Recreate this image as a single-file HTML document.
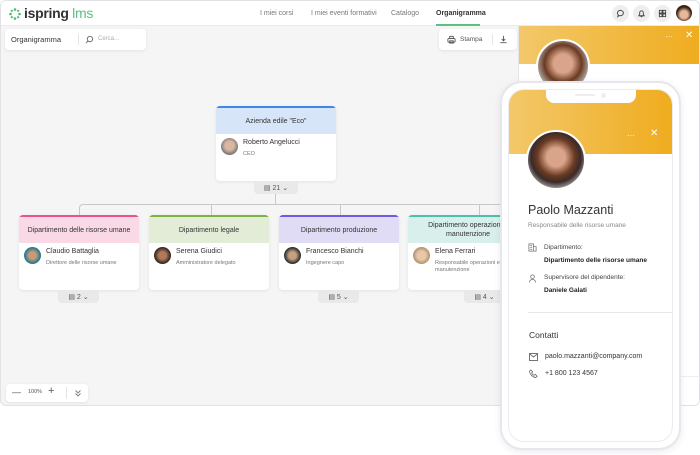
<!DOCTYPE html>
<html><head><meta charset="utf-8"><style>
*{box-sizing:border-box;margin:0;padding:0}
body{width:700px;height:455px;background:#fff;font-family:"Liberation Sans",Arial,sans-serif;position:relative;overflow:hidden;color:#333}
.abs{position:absolute}
.app{left:0;top:0;width:700px;height:406px;border:1px solid #e2e2e6;border-radius:6px;background:#f5f5f5;overflow:hidden}
.nav{left:0;top:0;width:700px;height:25px;background:#fff;border-bottom:1px solid #ebebeb}
.ni{position:absolute;top:9px;font-size:7px;color:#777}
.card{background:#fff;border-radius:4px;box-shadow:0 1px 3px rgba(0,0,0,.08);overflow:hidden}
.ch{height:28px;display:flex;align-items:center;justify-content:center;font-size:7px;color:#333;text-align:center;border-top:2px solid}
.av{position:absolute;width:17px;height:17px;border-radius:50%}
.nm{position:absolute;font-size:7px;color:#333}
.rl{position:absolute;font-size:5.5px;color:#777;line-height:7px}
.pill{background:#e9e9ea;border-radius:0 0 4px 4px;font-size:7px;color:#555;display:flex;align-items:center;justify-content:center;gap:3px;height:13px}
.ln{background:#c9c9cc}
.btn{width:17px;height:17px;border-radius:50%;background:#eeeeef;top:4px}
</style></head><body>
<div class="abs app">
 <div class="abs nav">
  <svg class="abs" style="left:8px;top:7px" width="12" height="12" viewBox="0 0 12 12" fill="#4cb870"><circle cx="6" cy="1.5" r="1.3"/><circle cx="6" cy="10.5" r="1.3"/><circle cx="1.5" cy="6" r="1.3"/><circle cx="10.5" cy="6" r="1.3"/><circle cx="2.8" cy="2.8" r="1.1"/><circle cx="9.2" cy="2.8" r="1.1"/><circle cx="2.8" cy="9.2" r="1.1"/><circle cx="9.2" cy="9.2" r="1.1"/></svg>
  <div class="abs" style="left:23px;top:4px;font-size:14px;font-weight:bold;color:#333;letter-spacing:-.3px;white-space:nowrap">ispring <b style="color:#5cc080;font-weight:normal">lms</b></div>
  <div class="ni" style="left:259px">I miei corsi</div>
  <div class="ni" style="left:310px">I miei eventi formativi</div>
  <div class="ni" style="left:390px">Catalogo</div>
  <div class="ni" style="left:435px;color:#333;font-weight:bold">Organigramma</div>
  <div class="abs" style="left:435px;top:23px;width:44px;height:2px;background:#5cc080"></div>
  <div class="abs btn" style="left:611px"></div>
  <div class="abs btn" style="left:632px"></div>
  <div class="abs btn" style="left:653px"></div>
  <div class="abs" style="left:675px;top:4px;width:16px;height:16px;border-radius:50%;background:radial-gradient(circle at 50% 60%,#e9b89a 30%,#3a2418 60%)"></div>
  <svg class="abs" style="left:615px;top:8px" width="9" height="9" viewBox="0 0 10 10" fill="none" stroke="#444" stroke-width="1"><path d="M5 1.5a3.5 3 0 1 1-1.5 5.8L2 8.5l.5-2A3.5 3 0 0 1 5 1.5z"/></svg>
  <svg class="abs" style="left:636px;top:8px" width="9" height="9" viewBox="0 0 10 10" fill="none" stroke="#444" stroke-width="1"><path d="M2 7.5h6l-1-1.5V4a2 2 0 0 0-4 0v2zM4 8.5h2"/></svg>
  <svg class="abs" style="left:657px;top:8px" width="9" height="9" viewBox="0 0 10 10" fill="none" stroke="#444" stroke-width="1"><rect x="1.5" y="1.5" width="3" height="3"/><rect x="5.5" y="1.5" width="3" height="3"/><rect x="1.5" y="5.5" width="3" height="3"/><rect x="5.5" y="5.5" width="3" height="3"/></svg>
 </div>
 <div class="abs card" style="left:4px;top:28px;width:141px;height:21px">
  <div class="abs" style="left:6px;top:6px;font-size:7.5px;color:#333">Organigramma</div>
  <div class="abs" style="left:73px;top:5px;width:1px;height:11px;background:#e5e5e5"></div>
  <svg class="abs" style="left:80px;top:6px" width="9" height="9" viewBox="0 0 10 10" fill="none" stroke="#666" stroke-width="1"><circle cx="5.5" cy="4.5" r="3"/><path d="M3.3 6.7L1 9"/></svg>
  <div class="abs" style="left:93px;top:7px;font-size:6px;color:#aaa">Cerca...</div>
 </div>
 <div class="abs card" style="left:438px;top:28px;width:78px;height:21px">
  <svg class="abs" style="left:8px;top:6px" width="9" height="9" viewBox="0 0 10 10" fill="none" stroke="#555" stroke-width="1"><rect x="1" y="4" width="8" height="4" rx="1"/><rect x="3" y="1.5" width="4" height="2.5"/><rect x="3" y="6.5" width="4" height="2.5"/></svg>
  <div class="abs" style="left:21px;top:7px;font-size:6.5px;color:#555">Stampa</div>
  <div class="abs" style="left:53px;top:5px;width:1px;height:11px;background:#e5e5e5"></div>
  <svg class="abs" style="left:60px;top:6px" width="9" height="9" viewBox="0 0 10 10" fill="none" stroke="#555" stroke-width="1"><path d="M5 1v5M3 4.5L5 6.5 7 4.5M1.5 8.5h7"/></svg>
 </div>

 <div class="abs card" style="left:215px;top:105px;width:120px;height:75px">
  <div class="ch" style="background:#d6e6f8;border-color:#3d86e6">Azienda edile "Eco"</div>
  <div class="av" style="left:5px;top:32px;background:radial-gradient(circle at 50% 45%,#d9b7a0 35%,#777 70%)"></div>
  <div class="nm" style="left:27px;top:33px">Roberto Angelucci</div>
  <div class="rl" style="left:27px;top:45px">CEO</div>
 </div>
 <div class="abs pill" style="left:253px;top:180px;width:44px">▤ 21 ⌄</div>
 <div class="abs ln" style="left:274px;top:193px;width:1px;height:11px"></div>
 <div class="abs" style="left:78px;top:203px;width:440px;height:11px;border:1px solid #c9c9cc;border-bottom:none;border-radius:4px 0 0 0"></div>
 <div class="abs ln" style="left:210px;top:203px;width:1px;height:11px"></div>
 <div class="abs ln" style="left:339px;top:203px;width:1px;height:11px"></div>
 <div class="abs ln" style="left:478px;top:203px;width:1px;height:11px"></div>

 <div class="abs card" style="left:18px;top:214px;width:120px;height:75px">
  <div class="ch" style="background:#f9d9e6;border-color:#e85390">Dipartimento delle risorse umane</div>
  <div class="av" style="left:5px;top:32px;background:radial-gradient(circle at 50% 50%,#c79a7a 30%,#2a7a8a 65%)"></div>
  <div class="nm" style="left:27px;top:33px">Claudio Battaglia</div>
  <div class="rl" style="left:27px;top:45px">Direttore delle risorse umane</div>
 </div>
 <div class="abs pill" style="left:57px;top:289px;width:41px">▤ 2 ⌄</div>
 <div class="abs card" style="left:148px;top:214px;width:120px;height:75px">
  <div class="ch" style="background:#e3ecd6;border-color:#7cb342">Dipartimento legale</div>
  <div class="av" style="left:5px;top:32px;background:radial-gradient(circle at 50% 50%,#b07a5a 30%,#3a2a22 65%)"></div>
  <div class="nm" style="left:27px;top:33px">Serena Giudici</div>
  <div class="rl" style="left:27px;top:45px">Amministratore delegato</div>
 </div>
 <div class="abs card" style="left:278px;top:214px;width:120px;height:75px">
  <div class="ch" style="background:#e1dcf6;border-color:#6e5de0">Dipartimento produzione</div>
  <div class="av" style="left:5px;top:32px;background:radial-gradient(circle at 50% 50%,#c8a080 30%,#333 65%)"></div>
  <div class="nm" style="left:27px;top:33px">Francesco Bianchi</div>
  <div class="rl" style="left:27px;top:45px">Ingegnere capo</div>
 </div>
 <div class="abs pill" style="left:317px;top:289px;width:41px">▤ 5 ⌄</div>
 <div class="abs card" style="left:407px;top:214px;width:120px;height:75px">
  <div class="ch" style="background:#d9efeb;border-color:#4cc2a8;line-height:9px">Dipartimento operazioni e<br>manutenzione</div>
  <div class="av" style="left:5px;top:32px;background:radial-gradient(circle at 50% 50%,#e8c8a8 35%,#b89870 65%)"></div>
  <div class="nm" style="left:27px;top:33px">Elena Ferrari</div>
  <div class="rl" style="left:27px;top:45px">Responsabile operazioni e<br>manutenzione</div>
 </div>
 <div class="abs pill" style="left:463px;top:289px;width:41px">▤ 4 ⌄</div>

 <div class="abs card" style="left:5px;top:383px;width:82px;height:18px">
  <div class="abs" style="left:6px;top:3px;font-size:9px;color:#555">—</div>
  <div class="abs" style="left:22px;top:5px;font-size:5.5px;color:#555">100%</div>
  <div class="abs" style="left:42px;top:1px;font-size:11px;color:#555">+</div>
  <div class="abs" style="left:60px;top:3px;width:1px;height:12px;background:#e5e5e5"></div>
  <svg class="abs" style="left:68px;top:5px" width="8" height="8" viewBox="0 0 8 8" fill="none" stroke="#777" stroke-width=".9"><path d="M1.5 1.5L4 4 6.5 1.5M1.5 4.5L4 7 6.5 4.5"/></svg>
 </div>

 <div class="abs" style="left:517px;top:25px;width:183px;height:381px;background:#fff;border-left:1px solid #e5e5e5">
  <div class="abs" style="left:0;top:0;width:183px;height:38px;background:linear-gradient(90deg,#f3c86a,#efac1e)"></div>
  <div class="abs" style="left:146px;top:6px;color:#fff;font-size:8px">···</div>
  <div class="abs" style="left:166px;top:4px;color:#fff;font-size:10px">✕</div>
  <div class="abs" style="left:17px;top:13px;width:54px;height:54px;border-radius:50%;border:2px solid #fff;background:radial-gradient(circle at 50% 45%,#d9a48a 25%,#6a3a22 50%,#bbb 75%)"></div>
  <div class="abs" style="left:0;top:350px;width:183px;height:1px;background:#eee"></div>
 </div>
</div>

<div class="abs" style="left:500px;top:81px;width:181px;height:369px;border-radius:22px;background:#fff;border:2px solid #e6e6ee;box-shadow:0 2px 8px rgba(0,0,0,.08)">
 <div class="abs" style="left:6px;top:6px;width:165px;height:353px;border-radius:16px;border:1px solid #ececf0;overflow:hidden;background:#fff">
  <div class="abs" style="left:0;top:0;width:165px;height:64px;background:linear-gradient(90deg,#f3c86a,#efac1e)"></div>
  <div class="abs" style="left:37px;top:-1px;width:90px;height:14px;background:#fff;border-radius:0 0 8px 8px"></div>
  <div class="abs" style="left:66px;top:4px;width:20px;height:2px;border-radius:1px;background:#eee"></div>
  <div class="abs" style="left:92px;top:3px;width:5px;height:5px;border-radius:50%;background:#eee"></div>
  <div class="abs" style="left:118px;top:41px;color:#fff;font-size:8px">···</div>
  <div class="abs" style="left:141px;top:38px;color:#fff;font-size:10px">✕</div>
  <div class="abs" style="left:17px;top:40px;width:60px;height:60px;border-radius:50%;border:2px solid #fff;background:radial-gradient(circle at 50% 45%,#d9a48a 22%,#6a3a22 45%,#3a2a2a 60%,#bbb 80%)"></div>
  <div class="abs" style="left:19px;top:113px;font-size:12.5px;color:#333">Paolo Mazzanti</div>
  <div class="abs" style="left:19px;top:132px;font-size:6.5px;color:#888">Responsabile delle risorse umane</div>
  <svg class="abs" style="left:19px;top:153px" width="9" height="9" viewBox="0 0 10 10" fill="none" stroke="#777" stroke-width=".9"><rect x="1" y="1" width="5" height="8"/><path d="M6 4h3v5H6M2.5 3h2M2.5 5h2M2.5 7h2"/></svg>
  <div class="abs" style="left:35px;top:154px;font-size:6.5px;color:#444">Dipartimento:</div>
  <div class="abs" style="left:35px;top:167px;font-size:6.5px;color:#222;font-weight:bold">Dipartimento delle risorse umane</div>
  <svg class="abs" style="left:19px;top:184px" width="9" height="9" viewBox="0 0 10 10" fill="none" stroke="#777" stroke-width=".9"><circle cx="5" cy="3" r="2"/><path d="M1.5 9.5a3.5 3.5 0 0 1 7 0"/></svg>
  <div class="abs" style="left:35px;top:184px;font-size:6.5px;color:#444">Supervisore del dipendente:</div>
  <div class="abs" style="left:35px;top:197px;font-size:6.5px;color:#222;font-weight:bold">Daniele Galati</div>
  <div class="abs" style="left:19px;top:222px;width:146px;height:1px;background:#e8e8e8"></div>
  <div class="abs" style="left:20px;top:240px;font-size:8.5px;color:#333">Contatti</div>
  <svg class="abs" style="left:20px;top:263px" width="9" height="8" viewBox="0 0 9 8" fill="none" stroke="#666" stroke-width=".9"><rect x=".5" y=".5" width="8" height="7"/><path d="M.5 .8L4.5 4 8.5 .8"/></svg>
  <div class="abs" style="left:36px;top:263px;font-size:7px;color:#333">paolo.mazzanti@company.com</div>
  <svg class="abs" style="left:20px;top:279px" width="9" height="9" viewBox="0 0 10 10" fill="none" stroke="#666" stroke-width=".9"><path d="M2 1l2 2-1 1.5a6 6 0 0 0 2.5 2.5L7 6l2 2-1.5 1.5C4 9 1 6 .5 2.5z"/></svg>
  <div class="abs" style="left:36px;top:280px;font-size:7px;color:#333">+1 800 123 4567</div>
 </div>
</div>
</body></html>
